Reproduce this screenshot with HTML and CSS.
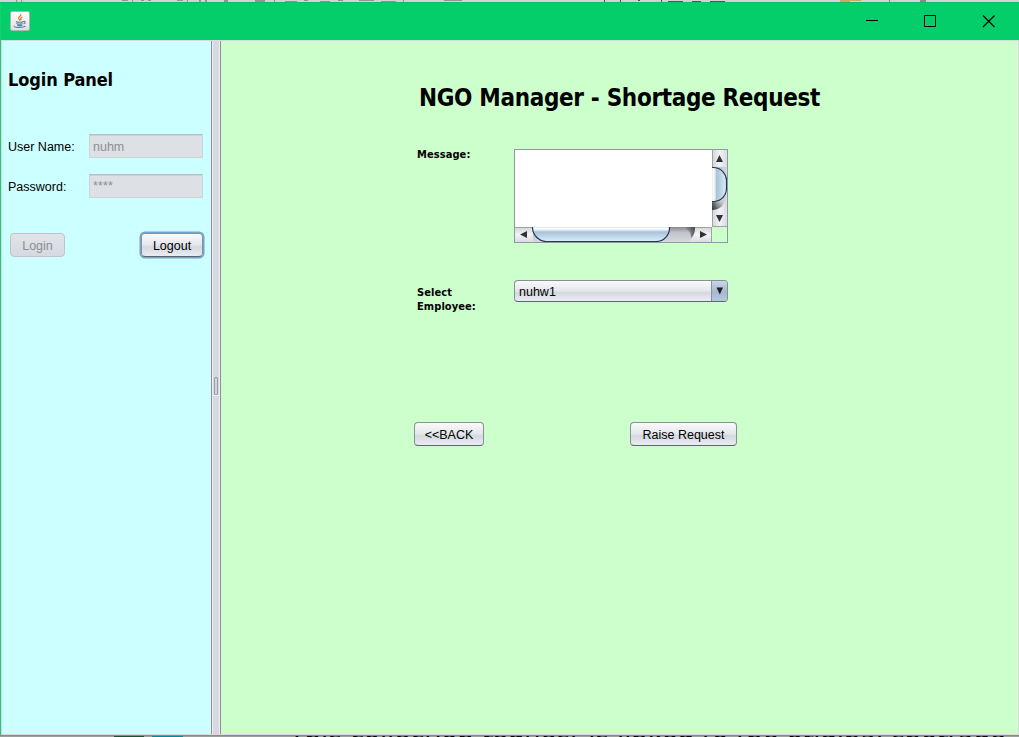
FILE: index.html
```html
<!DOCTYPE html>
<html lang="en">
<head>
<meta charset="utf-8">
<title>NGO Manager</title>
<link rel="stylesheet" href="styles.css">
</head>
<body>
<div class="behind-top">
<svg width="1019" height="2" viewBox="0 0 1019 2" fill="#919493"><path d="M16 0h1v2h-1zM21 0h1v2h-1zM122 0h6v1h-6zM132 0h1v2h-1zM141 0h3v1h-3zM148 0h3v1h-3zM177 0h6v1h-6zM187 0h1v2h-1zM199 0h2v2h-2zM205 0h2v2h-2zM224 0h4v2h-4zM255 0h10v2h-10zM274 0h1v2h-1zM285 1h12v1h-12zM304 0h4v1h-4zM320 1h10v1h-10zM338 0h5v1h-5zM359 0h15v1h-15zM381 1h15v1h-15zM403 0h1v2h-1zM444 0h18v1h-18z"/><path fill="#555" d="M604 0h1v2h-1zM620 0h1v2h-1zM638 0h2v1h-2zM661 0h1v2h-1zM668 1h15v1h-15zM692 1h9v1h-9zM710 1h15v1h-15z"/><path fill="#d0a760" d="M840 0h21v1h-21zM840 1h10v1h-10z"/><path fill="#888" d="M889 0h1v2h-1zM920 0h6v2h-6z"/></svg>
</div>
<div class="window">
  <header class="titlebar">
    <span class="app-icon">
      <svg width="16" height="16" viewBox="0 0 16 16" fill="none"><path d="M8.800 1c1 2-3 3-2 4.600L8 7.600M10.500 4c-2.500 1-2 2 -1.200 3.200" stroke="#e87c25" stroke-width="1.300"/><path d="M4 8.500c1 1 6 1 7.500 0M4.500 10.400c1 1 4.500 1 6 0M5.300 12c1 .8 4 .8 5 0M11.500 8.500c2.500-.6 2 2 0 2.500M2.500 13c-2 1.500 8 2 11 .3" stroke="#5b7f9f" stroke-width="1.100"/></svg>
    </span>
    <div class="controls">
      <svg width="13" height="13" viewBox="0 0 13 13"><path d="M0 5.500h12" stroke="#000"/></svg>
      <svg width="13" height="13" viewBox="0 0 13 13"><path d="M.5.5h11v11H.5z" fill="none" stroke="#000"/></svg>
      <svg width="13" height="13" viewBox="0 0 13 13"><path d="M1 .5l11.500 11.500M12.500 .5L1 12" stroke="#000" stroke-width="1.200"/></svg>
    </div>
  </header>
  <div class="split">
    <aside class="login">
      <h2>Login Panel</h2>
      <div class="field first"><label>User Name:</label><div class="input">nuhm</div></div>
      <div class="field"><label>Password:</label><div class="input stars">****</div></div>
      <div class="actions">
        <div class="btn disabled">Login</div>
        <div class="btn focused">Logout</div>
      </div>
    </aside>
    <div class="divider"><span class="grip"></span></div>
    <main class="content">
      <h1>NGO Manager - Shortage Request</h1>
      <div class="row message">
        <label>Message:</label>
        <div class="scrollpane">
          <div class="textarea"></div>
          <svg width="15" height="77" viewBox="0 0 15 77">
            <defs>
              <linearGradient id="track"><stop stop-color="#777a80"/><stop offset=".35" stop-color="#babdc4"/><stop offset="1" stop-color="#d6d9df"/></linearGradient>
              <linearGradient id="thumb"><stop offset="0" stop-color="#a5bdd3"/><stop offset=".12" stop-color="#fff"/><stop offset=".27" stop-color="#dfeaf4"/><stop offset=".36" stop-color="#a9c1d7"/><stop offset="1" stop-color="#d9efff"/></linearGradient>
              <linearGradient id="cap"><stop stop-color="#d1d3d6"/><stop offset=".5" stop-color="#f2f3f5"/><stop offset="1" stop-color="#d9dce1"/></linearGradient>
              <linearGradient id="shade" x1="0" y1="1" x2="1" y2="0"><stop stop-color="#222" stop-opacity=".8"/><stop offset=".8" stop-color="#222" stop-opacity="0"/></linearGradient>
            </defs>
            <path fill="url(#cap)" d="M0 0h15v77H0z"/>
            <path fill="url(#track)" d="M0 17h15v28C14 54 9 60 0 60z"/>
            <path fill="url(#shade)" d="M0 51h13C11 56 6 60 0 60z"/>
            <path fill="url(#thumb)" stroke="#27394e" stroke-width="1.200" d="M-1 17.500H2C10 18 14.500 25 14.500 30v8C14.500 45 10 51 2 51.500h-3z"/>
            <path fill="#303235" d="M7.500 5l3.500 7H4zM4 65h7l-3.500 7z"/>
            <path d="M.5 0v17M.5 60v17M0 76.500h15" stroke="#9fa2aa"/>
          </svg>
          <svg width="197" height="15" viewBox="0 0 197 15">
            <defs>
              <linearGradient id="htrack" x2="0" y2="1"><stop stop-color="#85888d"/><stop offset=".35" stop-color="#bfc2c8"/><stop offset="1" stop-color="#d6d9df"/></linearGradient>
              <linearGradient id="hthumb" x2="0" y2="1"><stop stop-color="#a5bdd3"/><stop offset=".15" stop-color="#fff"/><stop offset=".27" stop-color="#dfeaf4"/><stop offset=".38" stop-color="#a9c1d7"/><stop offset="1" stop-color="#d9efff"/></linearGradient>
              <linearGradient id="hcap" x2="0" y2="1"><stop stop-color="#d1d3d6"/><stop offset=".5" stop-color="#f2f3f5"/><stop offset="1" stop-color="#d9dce1"/></linearGradient>
              <linearGradient id="hshade"><stop stop-color="#222" stop-opacity="0"/><stop offset="1" stop-color="#222" stop-opacity=".7"/></linearGradient>
            </defs>
            <path fill="url(#hcap)" d="M0 0h197v15H0z"/>
            <path fill="url(#htrack)" d="M18 0h162c0 8-3 14-9 15H18z"/>
            <path fill="url(#hshade)" d="M170 0h10c0 5-1 8-4 11 0-5-2-8-6-9z"/>
            <path fill="url(#hthumb)" stroke="#27394e" stroke-width="1.200" d="M17.500-1V1C18 9 25 14.500 31 14.500h110C149 14.500 154.500 8 154.500 1v-2z"/>
            <path fill="#303235" d="M12 4v7L5 7.500zM185 4l7 3.500-7 3.500z"/>
            <path d="M0 .5h17M180 .5h17M196.500 0v15" stroke="#9fa2aa"/>
          </svg>
          <div class="corner"></div>
        </div>
      </div>
      <div class="row employee">
        <label>Select<br>Employee:</label>
        <div class="combo"><span>nuhw1</span><i><svg width="8" height="8" viewBox="0 0 8 8"><path d="M.5.500h6.500L3.800 7.500z" fill="#1d2024"/></svg></i></div>
      </div>
      <div class="footer">
        <div class="btn back">&lt;&lt;BACK</div>
        <div class="btn raise">Raise Request</div>
      </div>
    </main>
  </div>
</div>
<div class="behind-bottom"><i class="mark dark"></i><i class="mark blue"></i><span>This collection request is linked to the original shortage</span></div>
</body>
</html>
```
FILE: styles.css
```css
* { box-sizing: border-box; }
body { margin: 0; width: 1019px; height: 737px; overflow: hidden; font: 12.5px/14px "Liberation Sans", Arial, sans-serif; color: #000; }
.behind-top { height: 2px; background: #d0d3d2; }
.behind-top svg { display: block; }
.window { height: 734px; background: #03ce6a; border-top: 1px solid #10bd68; border-left: 1px solid #14cf75; border-bottom: 1px solid #1bc978; }
.titlebar { height: 37px; display: flex; justify-content: space-between; padding: 8px 24px 0 9px; }
.app-icon { width: 20px; height: 20px; display: flex; align-items: center; justify-content: center; border-radius: 2px; border: 1px solid #a6b8b0; background: linear-gradient(#fff, #dfe0e3); }
.app-icon svg { display: block; }
.controls { display: flex; gap: 45px; padding-top: 4px; }
.controls svg { display: block; }
.split { height: 695px; display: flex; border: 1px solid #d6d9df; }
.login { width: 209px; padding: 28px 7px 0 6px; background: #ccffff; }
h1, h2, .row label { font-family: "DejaVu Sans Condensed", "DejaVu Sans", sans-serif; font-weight: bold; }
h2 { margin: 0; font-size: 18px; line-height: 22px; letter-spacing: -0.1px; white-space: nowrap; }
.field { display: flex; align-items: center; height: 24px; margin-top: 16px; }
.field.first { margin-top: 43px; }
.field label { width: 81px; padding-top: 1px; white-space: nowrap; }
.input { width: 114px; height: 24px; padding: 4px 4px 4px 3px; line-height: 16px; color: #8e8f91; background: #dde0e5; border: 1px solid #cfd2d6; border-top-color: #bbc0c5; box-shadow: inset 0 1px #cdd1d6; }
.stars { letter-spacing: 0.1px; line-height: 15px; }
.actions { display: flex; justify-content: space-between; margin-top: 35px; padding: 0 1px 0 2px; }
.btn { height: 24px; padding-top: 1px; display: flex; align-items: center; justify-content: center; white-space: nowrap; border: 1px solid #8b8e95; border-bottom-color: #5f636c; border-radius: 4px; background: linear-gradient(#fafafb, #e4e6ea 50%, #d5d8df 58%, #e9ecf2); }
.btn.disabled { width: 55px; color: #8e8f91; border-color: #c0c4ca; background: linear-gradient(#e1e4e8, #d6d9df); }
.btn.focused { width: 62px; box-shadow: 0 0 0 1.500px #73a4d1; }
.divider { width: 10px; display: flex; align-items: center; justify-content: center; background: #d6d9df; border: solid #8c8f98; border-width: 0 1px; box-shadow: inset 1px 0 #eeeff3, inset -1px 0 #eeeff3; }
.grip { width: 4px; height: 18px; border: 1px solid #9a9da6; border-radius: 1px; background: #d2d5dc; box-shadow: 0 1px #f2f3f5; margin-top: -3px; }
.content { flex: 1; padding: 42px 0 0 196px; background: #ccffcc; }
h1 { margin: 0 0 0 2px; font-size: 24px; line-height: 30px; letter-spacing: -0.34px; white-space: nowrap; }
.row { display: flex; align-items: flex-start; }
.row label { width: 97px; font-size: 11px; line-height: 14px; letter-spacing: 0.08px; }
.message { margin-top: 36px; }
.message label { margin-top: -1px; }
.scrollpane { width: 214px; height: 94px; display: grid; grid-template: 77px 15px / 197px 15px; border: 1px solid #9297a1; }
.scrollpane svg { display: block; }
.textarea { background: #fff; }
.employee { margin-top: 37px; }
.employee label { padding-top: 6px; margin-bottom: -1px; }
.combo { width: 214px; height: 22px; display: flex; justify-content: space-between; overflow: hidden; border: 1px solid #898d96; border-bottom-color: #5e6470; border-radius: 4px; background: linear-gradient(#fafafb, #e4e6ea 50%, #d5d8df 58%, #e9ecf2); }
.combo span { padding: 4px; line-height: 14px; }
.combo i { width: 16px; display: flex; align-items: center; justify-content: center; border-left: 1px solid #8294aa; background: linear-gradient(#c9d7e6, #a5b8cd 55%, #b5cadf); }
.footer { display: flex; margin: 109px 0 0 -3px; gap: 146px; }
.back { width: 70px; }
.raise { width: 107px; }
.behind-bottom { height: 1px; overflow: hidden; display: flex; align-items: flex-start; background: #9aa09c; }
.mark { flex: none; width: 30px; height: 1px; margin-left: 114px; background: #1b5232; }
.mark.blue { width: 31px; margin-left: 8px; background: #008b9a; }
.behind-bottom span { margin: -12px 0 0 106px; font: 28.7px/32px "DejaVu Sans Condensed", sans-serif; white-space: nowrap; }
```
